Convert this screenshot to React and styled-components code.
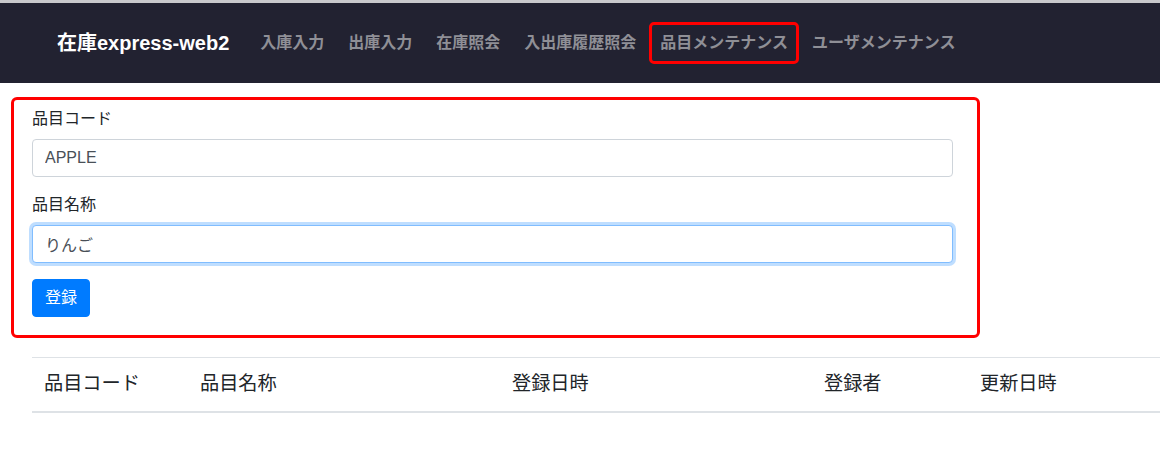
import React from "react";
import styled, { createGlobalStyle } from "styled-components";

const GlobalStyle = createGlobalStyle`
  html, body {
    margin: 0;
    padding: 0;
    background: #fff;
    overflow: hidden;
  }
  body {
    font-family: "Liberation Sans", "Noto Sans CJK JP", sans-serif;
    font-size: 16px;
    line-height: 1.5;
    color: #212529;
  }
  * { box-sizing: border-box; }
`;

const Page = styled.div`
  border-top: 3px solid #c9c9cc;
  width: 1160px;
`;

const NavBar = styled.nav`
  height: 80px;
  background: #222231;
  display: flex;
  align-items: center;
  padding-left: 57px;
`;

const Brand = styled.a`
  color: #fff;
  font-weight: bold;
  font-size: 20px;
  line-height: 30px;
  margin-right: 20px;
  white-space: nowrap;
  text-decoration: none;
`;

const NavList = styled.div`
  display: flex;
  align-items: center;
  gap: 2px;
`;

const NavLink = styled.a`
  color: #8f8f96;
  font-weight: bold;
  font-size: 16px;
  line-height: 24px;
  padding: 6px 8px;
  border: 3px solid ${(p) => (p.$active ? "#ff0000" : "transparent")};
  border-radius: 5px;
  white-space: nowrap;
  text-decoration: none;
`;

const FormCard = styled.form`
  margin: 14px 0 0 11px;
  width: 969px;
  border: 3px solid #ff0000;
  border-radius: 6px;
  padding: 7px 24px 18px 18px;
`;

const FormGroup = styled.div`
  margin-bottom: 16px;
  display: flex;
  flex-direction: column;
`;

const Label = styled.label`
  display: block;
  font-size: 16px;
  line-height: 24px;
  margin-bottom: 8px;
  color: #212529;
`;

const Input = styled.input`
  display: block;
  width: 100%;
  height: 38px;
  padding: 6px 12px;
  font-family: inherit;
  font-size: 16px;
  line-height: 24px;
  color: #495057;
  background: #fff;
  border: 1px solid ${(p) => (p.$focused ? "#80bdff" : "#ced4da")};
  border-radius: 4px;
  box-shadow: ${(p) => (p.$focused ? "0 0 0 3px rgba(0,123,255,.25)" : "none")};
  outline: none;
`;

const Button = styled.button`
  display: inline-block;
  font-family: inherit;
  font-size: 16px;
  line-height: 24px;
  padding: 6px 12px;
  color: #fff;
  background: #007bff;
  border: 1px solid #007bff;
  border-radius: 4px;
`;

const TableWrap = styled.div`
  margin: 19px 0 0 32px;
  overflow: hidden;
`;

const Table = styled.table`
  width: 1248px;
  border-collapse: collapse;
  table-layout: fixed;
  font-size: 19.2px;
  line-height: 1.5;
  color: #212529;
`;

const Th = styled.th`
  width: ${(p) => p.$w}px;
  text-align: left;
  font-weight: normal;
  padding: 12px;
  border-top: 1px solid #dee2e6;
  border-bottom: 2px solid #dee2e6;
  white-space: nowrap;
`;

const navItems = [
  "入庫入力",
  "出庫入力",
  "在庫照会",
  "入出庫履歴照会",
  "品目メンテナンス",
  "ユーザメンテナンス",
];

const columns = [
  { label: "品目コード", w: 156 },
  { label: "品目名称", w: 312 },
  { label: "登録日時", w: 312 },
  { label: "登録者", w: 156 },
  { label: "更新日時", w: 312 },
];

export default function App() {
  return (
    <Page>
      <GlobalStyle />
      <NavBar>
        <Brand href="#">在庫express-web2</Brand>
        <NavList>
          {navItems.map((item) => (
            <NavLink key={item} href="#" $active={item === "品目メンテナンス"}>
              {item}
            </NavLink>
          ))}
        </NavList>
      </NavBar>
      <FormCard onSubmit={(e) => e.preventDefault()}>
        <FormGroup>
          <Label>品目コード</Label>
          <Input defaultValue="APPLE" />
        </FormGroup>
        <FormGroup>
          <Label>品目名称</Label>
          <Input defaultValue="りんご" $focused />
        </FormGroup>
        <Button type="submit">登録</Button>
      </FormCard>
      <TableWrap>
        <Table>
          <thead>
            <tr>
              {columns.map((c) => (
                <Th key={c.label} $w={c.w}>
                  {c.label}
                </Th>
              ))}
            </tr>
          </thead>
          <tbody />
        </Table>
      </TableWrap>
    </Page>
  );
}
